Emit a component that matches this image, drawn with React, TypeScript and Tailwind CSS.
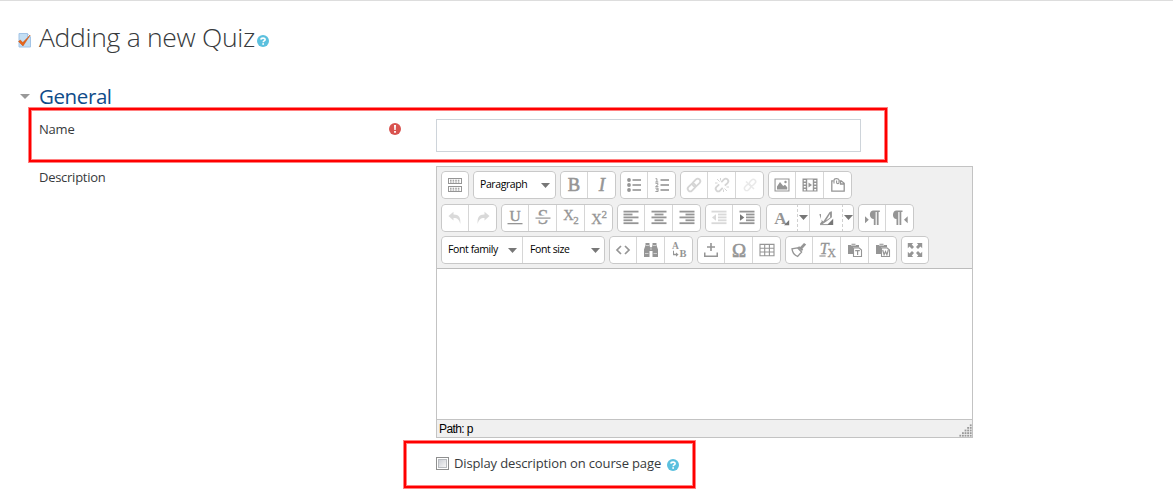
import type { ReactNode } from "react";

function Ic({ children, faded = false }: { children: ReactNode; faded?: boolean }) {
  return (
    <svg viewBox="0 0 14 14" className={faded ? "size-3.5 overflow-visible opacity-35" : "size-3.5 overflow-visible"} fill="#959595" stroke="none">
      {children}
    </svg>
  );
}

function Glyph({ children, size = 19, x = 7, y = 13, bold = false, italic = false, weight = 0 }: { children: ReactNode; size?: number; x?: number; y?: number; bold?: boolean; italic?: boolean; weight?: number }) {
  return (
    <text x={x} y={y} fontSize={size} textAnchor="middle" fontFamily="'Liberation Serif', serif" fontWeight={bold ? 700 : 400} fontStyle={italic ? "italic" : "normal"} stroke="#959595" strokeWidth={weight}>
      {children}
    </text>
  );
}

const undoPath = "M0.5 5 L5.5 0.8 V3.4 C10.5 3.2 13 6 12.3 13 C11.2 9 9.5 7 5.5 7.1 V9.6 Z";

const lines = (rows: [number, number][]) => rows.map(([x, w], i) => <rect key={i} x={x} y={-0.3 + i * 2.9} width={w} height="1.8" />);

const icons: Record<string, ReactNode> = {
  toggle: (
    <Ic>
      <path d="M0 0h14v6H0zM1 1v4h12V1z M0 8h14v6H0zM1 9v4h12V9z" fillRule="evenodd" />
      <path d="M2 2.3h10M2 4h10M2 10.3h10M2 12h10" stroke="#888" strokeWidth="1.1" strokeDasharray="1.6 1" />
    </Ic>
  ),
  bold: <Ic><Glyph size={18.5} weight={0.6}>B</Glyph></Ic>,
  italic: <Ic><Glyph italic size={19} weight={0.5}>I</Glyph></Ic>,
  bullets: (
    <Ic>
      {[2, 7, 12].map((y) => <g key={y}><circle cx="2" cy={y} r="1.9" /><rect x="5.5" y={y - 0.8} width="8.5" height="1.6" /></g>)}
    </Ic>
  ),
  numbers: (
    <Ic>
      {[2, 7, 12].map((y) => <rect key={y} x="5.5" y={y - 0.8} width="8.5" height="1.6" />)}
      <path d="M0.5 0.7h1.4V4M0.3 4h3M0.5 5.4h2.4v1.4L.6 8.6h2.8M0.4 10.2h2.7v3.3H.4M1 11.8h2" fill="none" stroke="#959595" strokeWidth="0.9" />
    </Ic>
  ),
  link: (
    <Ic faded>
      <g transform="rotate(-45 7 7)" fill="none" stroke="#888" strokeWidth="1.8">
        <rect x="-0.8" y="4.5" width="8.8" height="5" rx="2.5" /><rect x="6" y="4.5" width="8.8" height="5" rx="2.5" />
      </g>
    </Ic>
  ),
  unlink: (
    <Ic faded>
      <g transform="rotate(-45 7 7)" fill="none" stroke="#888" strokeWidth="1.8">
        <path d="M5.5 4.5H1.7a2.5 2.5 0 0 0 0 5H5.5M8.5 4.5h3.8a2.5 2.5 0 0 1 0 5H8.5" />
      </g>
      <path d="M2 1l2.5 2.5M5.5 0v2.5M0 5h2.5M12 13l-2.5-2.5M8.5 14v-2.5M14 9h-2.5" stroke="#888" />
    </Ic>
  ),
  nolink: (
    <Ic faded>
      <g opacity="0.5" fill="none" stroke="#888" strokeWidth="1.5">
        <g transform="rotate(-45 7 7)"><rect x="0" y="4.7" width="7" height="4.6" rx="2.3" /><rect x="7" y="4.7" width="7" height="4.6" rx="2.3" /></g>
        <path d="M3 3.5l8 7.5" />
      </g>
    </Ic>
  ),
  image: (
    <Ic>
      <path d="M-.5.5h15v13h-15zM.6 1.6v10.8h12.8V1.6z" fillRule="evenodd" />
      <path d="M2 11.5V8.5l3-4.5 3.2 4L10 6.7l2.2 2.5v2.3z" /><circle cx="10.5" cy="4" r="1.2" />
    </Ic>
  ),
  media: (
    <Ic>
      <path d="M-.5.5h15v13h-15zM4.2 1.6v10.8h5.6V1.6zM.8 2v1.5h2V2zM.8 5v1.5h2V5zM.8 8v1.5h2V8zM.8 11v1.5h2V11zM11.2 2v1.5h2V2zM11.2 5v1.5h2V5zM11.2 8v1.5h2V8zM11.2 11v1.5h2V11z" fillRule="evenodd" />
      <path d="M5.5 4.5L9 7 5.5 9.5z" />
    </Ic>
  ),
  files: (
    <Ic>
      <path d="M2.6 2.8H.8v10.4h12.4V5.3L10.2 2.8H8.3M9.5 3v3h3.6" fill="none" stroke="#959595" strokeWidth="1.3" />
      <path d="M3 5.5V2.4C3 .1 8 0 8 2.3V4.6C8 6 5.6 6 5.6 4.6V2.6" fill="none" stroke="#959595" strokeWidth="1.1" />
    </Ic>
  ),
  undo: <Ic faded><path d={undoPath} /></Ic>,
  redo: <Ic faded><path d={undoPath} transform="translate(14 0) scale(-1 1)" /></Ic>,
  underline: <Ic><Glyph size={15.5} y={9.5} weight={0.4}>U</Glyph><rect x="-.5" y="12" width="15" height="1.3" /></Ic>,
  strike: <Ic><Glyph size={20} weight={0.3}>S</Glyph><rect x="-.5" y="4.6" width="15" height="4.6" fill="#fff" /><rect x="-.5" y="6.5" width="15" height="1.2" /></Ic>,
  sub: <Ic><Glyph size={14.5} x={4.4} y={9} weight={0.3}>X</Glyph><Glyph size={11} x={12} y={13} weight={0.3}>2</Glyph></Ic>,
  sup: <Ic><Glyph size={14.5} x={4.6} y={13} weight={0.3}>X</Glyph><Glyph size={11} x={12.2} y={7} weight={0.3}>2</Glyph></Ic>,
  left: <Ic>{lines([[-0.5, 15], [-0.5, 9], [-0.5, 15], [-0.5, 9], [-0.5, 15]])}</Ic>,
  center: <Ic>{lines([[-0.5, 15], [2.5, 9], [-0.5, 15], [2.5, 9], [-0.5, 15]])}</Ic>,
  right: <Ic>{lines([[-0.5, 15], [5.5, 9], [-0.5, 15], [5.5, 9], [-0.5, 15]])}</Ic>,
  outdent: <Ic faded>{lines([[-0.5, 15], [6, 8.5], [6, 8.5], [6, 8.5], [-0.5, 15]])}<path d="M4 3.2v6.5L0 6.5z" /></Ic>,
  indent: <Ic>{lines([[-0.5, 15], [6, 8.5], [6, 8.5], [6, 8.5], [-0.5, 15]])}<path d="M0 3.2v6.5l4.3-3.3z" fill="#777" /></Ic>,
  color: <Ic><Glyph bold size={17} x={5.5} y={13}>A</Glyph><path d="M14.2 9v5.2H9z" fill="#777" /></Ic>,
  highlight: (
    <Ic>
      <path d="M.3 3.2L2 3v5.6l2.3 2L10.6 1l2.3-.8v6l-5.2 4.1-4 2.6H.8l2-2.6zM11 3L7 9.5l4.2-3z" fillRule="evenodd" /><path d="M14.2 7.8V14H8z" fill="#777" /><path d="M1 13.1h8v1H1z" />
    </Ic>
  ),
  ltr: <Ic><path d="M5.5 -.5h9.3v1.5h-1.2V14h-1.8V1h-1.2V14H8.8V8C4 8 3.5 0 8-.5zM0 5.3v7l3.8-3.5z" /></Ic>,
  rtl: <Ic><path d="M3-.5h6.5V1H8.3V14H6.5V1H5.3V14H3.5V8C-1.2 8-1 0 3-.5zM14.7 5.3v7L11 8.8z" /></Ic>,
  code: <Ic><path d="M5 3L1 7l4 4M9 3l4 4-4 4" fill="none" stroke="#959595" strokeWidth="1.7" /></Ic>,
  find: <Ic><path d="M1.5 0h4v2.2L6 4h2l.5-1.8V0h4v2.2L14 6.5V14H8.5V8h-3v6H0V6.5l1.5-4.3z" /><path d="M1 10.5h3.5M9.5 10.5H13M2 2.5h3M9 2.5h3M7 4v3" stroke="#ddd" strokeWidth=".8" /></Ic>,
  replace: <Ic><Glyph bold size={9.5} x={3.5} y={6.4}>A</Glyph><Glyph bold size={10.5} x={10.9} y={13.8}>B</Glyph><path d="M2 7.8v3h2v-1.4l2.6 2.2-2.6 2.1v-1.5H1v-4.4z" /></Ic>,
  nbsp: <Ic><path d="M0 9.5h1.5v3h11v-3H14V14H0zM6.2 0h1.6v3.2H11v1.6H7.8V8H6.2V4.8H3V3.2h3.2z" /></Ic>,
  omega: <Ic><Glyph size={19} y={13.5} weight={0.6}>Ω</Glyph></Ic>,
  table: <Ic><path d="M0 1.4h14v11.4H0zM0 5.2h14M0 9h14M4.7 1.4v11.4M9.4 1.4v11.4" fill="none" stroke="#959595" strokeWidth="1.1" /></Ic>,
  clean: <Ic><path d="M12 0l2.2 1.6-3.8 4.2.8 1-1.3 1.3L5.7 4.6 7 3.2l1.2.8z" /><path d="M5.5 4.8L0 5.8c.5 3.5 2.6 6.6 5.6 7.6L9.6 9z" fill="none" stroke="#959595" strokeWidth="1.3" /></Ic>,
  unformat: <Ic><Glyph italic size={16} x={4.2} y={10.6} weight={0.3}>T</Glyph><Glyph size={11.5} x={11.6} y={13.8} weight={0.3}>X</Glyph><path d="M-.6 12.4h6.2v1.2H-.6z" /></Ic>,
  pasteText: (
    <Ic>
      <path d="M0 2h3.5V.8h4V2H11v2.5H5V11H0z" /><path d="M3 2.2h5" stroke="#fff" strokeWidth=".7" />
      <path d="M5.5 5h5.8L13.5 7v6.5h-8z" fill="#fff" stroke="#959595" strokeWidth="1.1" /><path d="M7.2 7h4.6v1.3h-1.6v3.8H9V8.3H7.2z" />
    </Ic>
  ),
  pasteWord: (
    <Ic>
      <path d="M0 2h3.5V.8h4V2H11v2.5H5V11H0z" /><path d="M3 2.2h5" stroke="#fff" strokeWidth=".7" />
      <path d="M5.5 5h5.8L13.5 7v6.5h-8z" fill="#fff" stroke="#959595" strokeWidth="1.1" /><path d="M6.7 7l1.4 4.7L9.5 8.5l1.4 3.2L12.3 7" fill="none" stroke="#959595" strokeWidth="1.2" />
    </Ic>
  ),
  full: <Ic><path d="M-.2 0h5.4L3.7 1.5 6 4 4 6 1.5 3.6-.2 5.2zM14.2 0H8.8l1.5 1.5L8 4l2 2 2.5-2.4 1.7 1.6zM-.2 14h5.4l-1.5-1.5L6 10 4 8l-2.5 2.4L-.2 8.8zM14.2 14H8.8l1.5-1.5L8 10l2-2 2.5 2.4 1.7-1.6z" /></Ic>,
};

const box = "flex h-7 shrink-0 divide-x divide-[#d6d6d6] rounded-[4px] bg-white outline -outline-offset-1 outline-[#c9c9c9]";

function Group({ names }: { names: string[] }) {
  return (
    <div className={box}>
      {names.map((n) => (
        <button key={n} type="button" aria-label={n} className="flex w-7 items-center justify-center">
          {icons[n]}
        </button>
      ))}
    </div>
  );
}

function Caret() {
  return (
    <svg viewBox="0 0 9 5" className="h-[5px] w-[9px] shrink-0" fill="#777">
      <path d="M0 0h9L4.5 5z" />
    </svg>
  );
}

function Select({ label, size }: { label: string; size: string }) {
  return (
    <button type="button" className={`flex items-center justify-between pl-[7px] ${size}`}>
      <span className="pb-0.5 font-['Open_Sans',sans-serif] text-[10.5px] leading-none tracking-[-0.4px] whitespace-nowrap text-black">{label}</span>
      <Caret />
    </button>
  );
}

function SplitButton({ name }: { name: string }) {
  return (
    <div className="flex w-11">
      <button type="button" aria-label={name} className="flex w-8 items-center justify-center">{icons[name]}</button>
      <button type="button" aria-label={`${name} options`} className="flex w-3 items-center justify-center border-l border-dashed border-[#d0d0d0]"><Caret /></button>
    </div>
  );
}

function Help() {
  return (
    <svg viewBox="0 0 12 12" className="size-3 shrink-0">
      <circle cx="6" cy="6" r="6" fill="#5bc0de" />
      <path d="M3.9 4.6C4 2.6 8.2 2.5 8.1 4.7 8.1 6 6.2 5.9 6.2 7.3" fill="none" stroke="#fff" strokeWidth="1.6" />
      <rect x="5.3" y="8.2" width="1.7" height="1.6" fill="#fff" />
    </svg>
  );
}

function Highlight({ place }: { place: string }) {
  return (
    <div className={`pointer-events-none absolute border border-[#ff8080] ${place}`}>
      <div className="h-full border-2 border-[#ff0000]">
        <div className="h-full border border-[#ff8080]" />
      </div>
    </div>
  );
}

export default function App() {
  return (
    <main className="relative h-[493px] w-[1173px] overflow-hidden border-t border-[#dddddd] bg-white font-['Open_Sans',sans-serif] text-[13px] text-[#373a3c]">
      <header className="flex h-[76px] items-center pl-[18px]">
        <svg viewBox="0 0 14 15" className="mt-0.5 h-[15px] w-3.5">
          <path d="M1 .5h8.5L12.5 4v10H1z" fill="#c3def3" stroke="#a3c4e6" />
          <path d="M9.5.5V4h3" fill="#eef7ff" stroke="#a3c4e6" />
          <path d="M.5 8.5L2.3 7l2.5 2.6L12.2 2 5 13z" fill="#e8661b" stroke="#c9500d" strokeWidth=".5" />
        </svg>
        <h1 className="ml-[7px] pb-[5px] text-[26.5px] leading-8 font-light tracking-[-0.3px] whitespace-nowrap">Adding a new Quiz</h1>
        <span className="mt-1 ml-0.5"><Help /></span>
      </header>
      <section>
        <div className="flex h-[42px] items-center pl-5">
          <svg viewBox="0 0 10 5" className="mb-1 h-[5px] w-2.5" fill="#999"><path d="M0 0h10L5 5z" /></svg>
          <h2 className="ml-[9px] pb-1 text-[20.5px] leading-6 tracking-[-0.4px] text-[#0f4c8a]">General</h2>
        </div>
        <div className="flex h-[47px] pl-[39px]">
          <label htmlFor="name" className="w-[350px] pt-px leading-[18px] tracking-[-0.2px]">Name</label>
          <svg viewBox="0 0 12 12" className="mt-1 size-3">
            <circle cx="6" cy="6" r="6" fill="#d9534f" /><path d="M5 2h2l-.3 5H5.3zM5.1 8h1.8v1.8H5.1z" fill="#fff" />
          </svg>
          <input id="name" className="ml-[35px] h-[33px] w-[425px] border border-[#ced4da]" />
        </div>
        <div className="flex pl-[39px]">
          <div className="w-[397px] pt-0.5 leading-[18px] tracking-[-0.27px]">Description</div>
          <div className="flex h-[272px] w-[537px] flex-col border border-[#c3c3c3] bg-[#f0f0f0]">
            <div className="flex h-[102px] flex-col gap-[4.5px] border-b border-[#bcbcbc] pt-1 pl-1">
              <div className="flex gap-1">
                <Group names={["toggle"]} />
                <div className={box}><Select label="Paragraph" size="w-[83px] pr-1.5" /></div>
                <Group names={["bold", "italic"]} />
                <Group names={["bullets", "numbers"]} />
                <Group names={["link", "unlink", "nolink"]} />
                <Group names={["image", "media", "files"]} />
              </div>
              <div className="flex gap-1">
                <Group names={["undo", "redo"]} />
                <Group names={["underline", "strike", "sub", "sup"]} />
                <Group names={["left", "center", "right"]} />
                <Group names={["outdent", "indent"]} />
                <div className={`ml-px ${box}`}><SplitButton name="color" /><SplitButton name="highlight" /></div>
                <Group names={["ltr", "rtl"]} />
              </div>
              <div className="flex gap-1">
                <div className={box}>
                  <Select label="Font family" size="w-[82px] pr-[5px]" />
                  <Select label="Font size" size="w-[82px] pr-[5px]" />
                </div>
                <Group names={["code", "find", "replace"]} />
                <Group names={["nbsp", "omega", "table"]} />
                <Group names={["clean", "unformat", "pasteText", "pasteWord"]} />
                <Group names={["full"]} />
              </div>
            </div>
            <div className="flex-1 bg-white" />
            <div className="flex h-[18px] items-center justify-between border-t border-[#c3c3c3] pl-0.5">
              <span className="pt-px font-['Liberation_Sans',sans-serif] text-[12px] leading-none tracking-[-0.6px] text-black">Path: p</span>
              <svg viewBox="0 0 13 13" className="size-[13px] self-end" fill="#999">
                {[0, 1, 2, 3, 4].map((r) => Array.from({ length: r + 1 }, (_, c) => (
                  <rect key={`${r}-${c}`} x={10.8 - c * 2.6} y={0.4 + r * 2.6} width="1.8" height="1.8" />
                )))}
              </svg>
            </div>
          </div>
        </div>
        <div className="flex h-[52px] items-center pl-[436px]">
          <span className="mb-px size-[13px] border border-[#8e8f8f] bg-white p-px" role="checkbox" aria-checked="false" aria-label="Display description">
            <span className="block size-full border border-[#b9bcc0] bg-linear-to-br from-[#cdd0d6] to-[#f6f6f6]" />
          </span>
          <span className="ml-[5px] tracking-[-0.13px] whitespace-nowrap">Display description on course page</span>
          <span className="mt-0.5 ml-1.5"><Help /></span>
        </div>
      </section>
      <Highlight place="top-[106px] left-[28px] h-[56px] w-[860px]" />
      <Highlight place="top-[439px] left-[403px] h-[49px] w-[293px]" />
    </main>
  );
}
